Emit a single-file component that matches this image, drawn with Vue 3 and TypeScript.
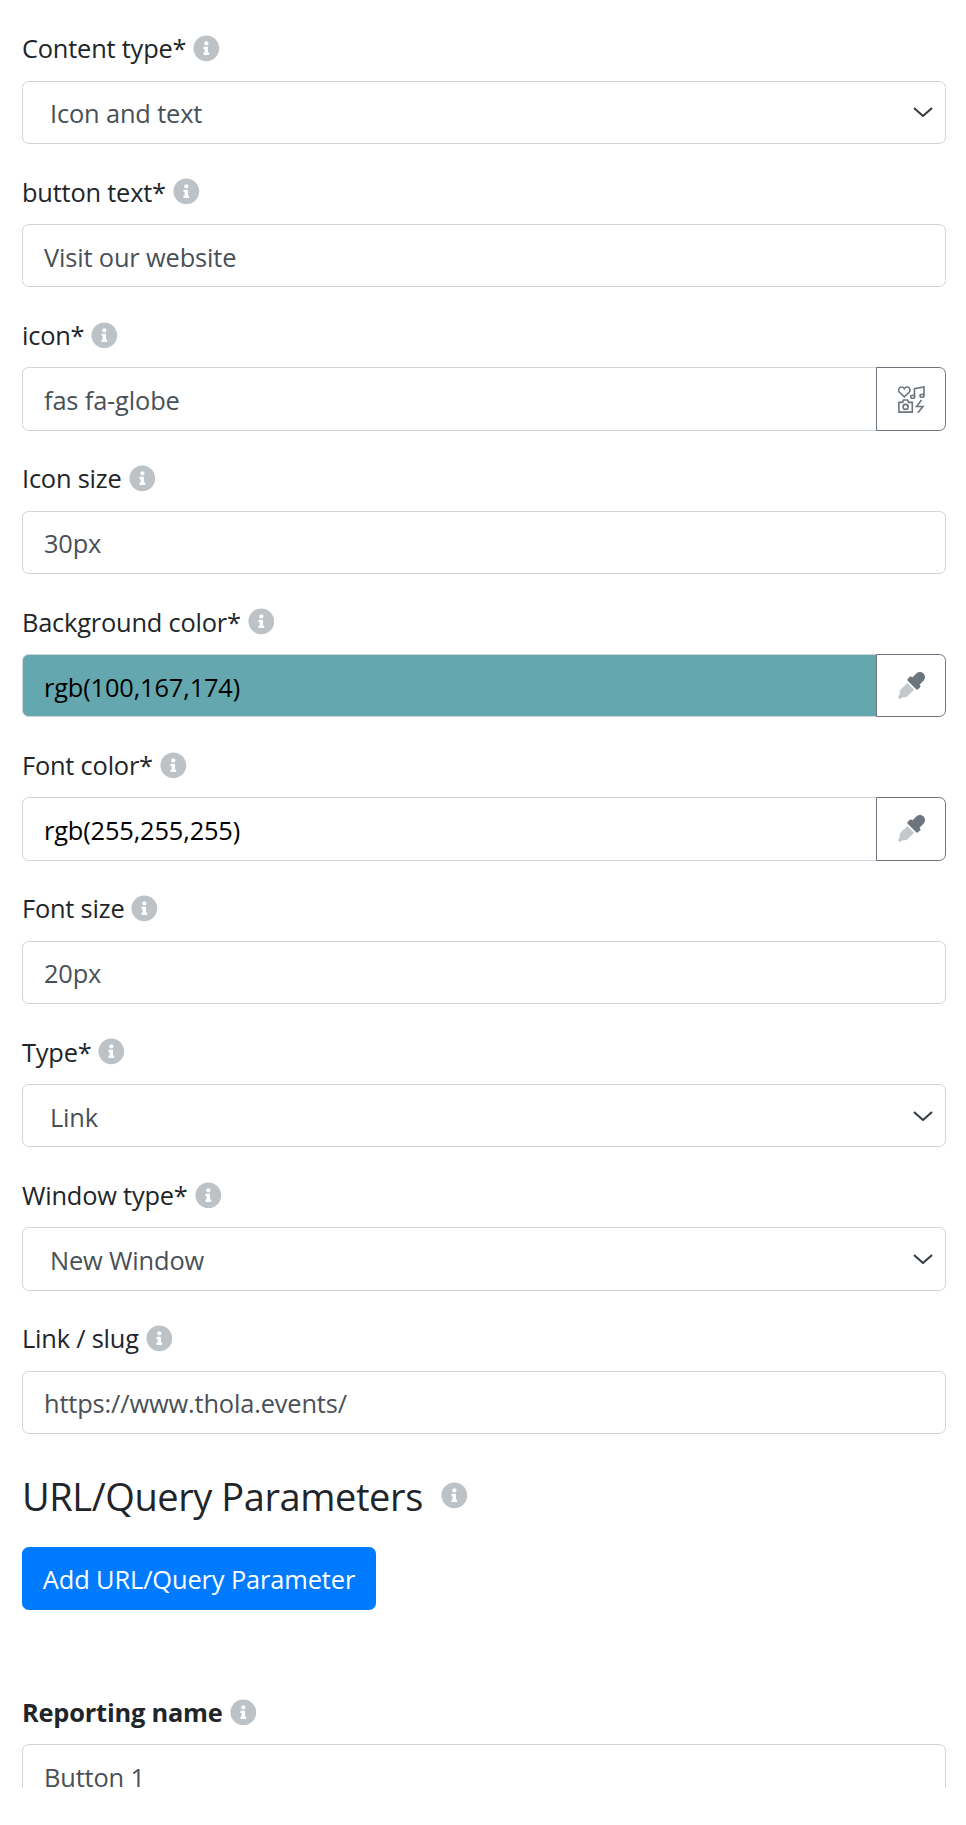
<script setup lang="ts">
type Kind = 'select' | 'input' | 'icon' | 'color'
interface Field {
  label: string
  value: string
  kind: Kind
  fill?: string
}

const fields: Field[] = [
  { label: 'Content type*', value: 'Icon and text', kind: 'select' },
  { label: 'button text*', value: 'Visit our website', kind: 'input' },
  { label: 'icon*', value: 'fas fa-globe', kind: 'icon' },
  { label: 'Icon size', value: '30px', kind: 'input' },
  { label: 'Background color*', value: 'rgb(100,167,174)', kind: 'color', fill: 'rgb(100,167,174)' },
  { label: 'Font color*', value: 'rgb(255,255,255)', kind: 'color', fill: 'rgb(255,255,255)' },
  { label: 'Font size', value: '20px', kind: 'input' },
  { label: 'Type*', value: 'Link', kind: 'select' },
  { label: 'Window type*', value: 'New Window', kind: 'select' },
  { label: 'Link / slug', value: 'https://www.thola.events/', kind: 'input' },
]

const infoPath =
  'M256 8C119.043 8 8 119.083 8 256c0 136.997 111.043 248 248 248s248-111.003 248-248C504 119.083 392.957 8 256 8zm0 110c23.196 0 42 18.804 42 42s-18.804 42-42 42-42-18.804-42-42 18.804-42 42-42zm56 254c0 6.627-5.373 12-12 12h-88c-6.627 0-12-5.373-12-12v-24c0-6.627 5.373-12 12-12h12v-64h-12c-6.627 0-12-5.373-12-12v-24c0-6.627 5.373-12 12-12h64c6.627 0 12 5.373 12 12v100h12c6.627 0 12 5.373 12 12v24z'
</script>

<template>
  <div class="page">
    <div v-for="f in fields" :key="f.label" class="group">
      <div class="label">
        <span>{{ f.label }}</span>
        <svg class="info" viewBox="0 0 512 512"><path :d="infoPath" /></svg>
      </div>
      <div class="control-row">
        <div
          class="control"
          :class="{ 'is-select': f.kind === 'select', 'is-color': f.kind === 'color', joined: f.kind === 'icon' || f.kind === 'color' }"
          :style="f.fill ? { backgroundColor: f.fill } : undefined"
        >
          <span class="value">{{ f.value }}</span>
          <svg v-if="f.kind === 'select'" class="chevron" viewBox="0 0 20 10">
            <path d="M1 1l9 8 9-8" />
          </svg>
        </div>
        <div v-if="f.kind === 'icon'" class="append">
          <svg class="picker" viewBox="0 0 27 27">
            <path d="M6.300 10.800L1.500 6.300C-.3 4.400 .9 1 3.500 1c1.200 0 2.200.6 2.800 1.600C6.900 1.600 7.900 1 9.100 1c2.600 0 3.800 3.400 2 5.300z" />
            <path d="M16.500 10.500V2.600L26 .9v8.600" />
            <ellipse cx="14.700" cy="10.700" rx="2" ry="1.500" />
            <ellipse cx="24" cy="9.700" rx="2" ry="1.500" />
            <path d="M.9 16.400h3.700l1-2.400h4l1 2.400h3.700v9.700H.9z" />
            <circle cx="7.600" cy="20.900" r="2.500" />
            <path d="M23.500 14L18.500 20.500H25L19.800 26.800" />
          </svg>
        </div>
        <div v-if="f.kind === 'color'" class="append">
          <svg class="dropper" viewBox="0 0 512 512">
            <path class="tube" d="M50.75 333.25c-12 12-18.75 28.28-18.75 45.26V424L0 480l32 32 56-32h45.49c16.97 0 33.25-6.74 45.25-18.74l126.64-126.62-128-128L50.75 333.25z" />
            <path class="bulb" d="M483.88 28.12c-37.47-37.5-98.28-37.5-135.75 0l-77.09 77.09-13.1-13.1c-9.44-9.41-24.65-9.3-33.94 0l-40.97 40.97c-9.37 9.37-9.37 24.57 0 33.94l161.94 161.94c9.44 9.44 24.65 9.3 33.94 0L419.88 288c9.37-9.37 9.37-24.57 0-33.94l-13.1-13.1 77.09-77.09c37.5-37.48 37.5-98.26.01-135.75z" />
          </svg>
        </div>
      </div>
    </div>

    <h4 class="heading">
      <span>URL/Query Parameters</span>
      <svg class="info" viewBox="0 0 512 512"><path :d="infoPath" /></svg>
    </h4>
    <button class="add" type="button"><span class="value">Add URL/Query Parameter</span></button>

    <div class="group reporting">
      <div class="label bold">
        <span>Reporting name</span>
        <svg class="info" viewBox="0 0 512 512"><path :d="infoPath" /></svg>
      </div>
      <div class="control"><span class="value">Button 1</span></div>
    </div>
  </div>
</template>

<style>
html,
body {
  margin: 0;
  background: #fff;
}
</style>

<style scoped>
.page {
  box-sizing: border-box;
  width: 966px;
  height: 1788px;
  overflow: hidden;
  padding: 27.4px 20px 0 22px;
  font-family: "Open Sans", "Noto Sans", sans-serif;
  font-size: 25.4px;
  letter-spacing: -0.15px;
  color: #212529;
  background: #fff;
}
.group {
  margin-bottom: 26.67px;
}
.label {
  box-sizing: border-box;
  display: flex;
  align-items: center;
  gap: 7px;
  height: 40px;
  padding-top: 2px;
  margin-bottom: 13.33px;
  letter-spacing: -0.2px;
}
.bold {
  font-weight: 700;
}
.info {
  flex: none;
  width: 26.67px;
  height: 26.67px;
  fill: #bdc2c7;
}
.control-row {
  display: flex;
}
.control {
  box-sizing: border-box;
  flex: 1;
  display: flex;
  align-items: center;
  justify-content: space-between;
  height: 63.33px;
  padding: 0 12px 0 21px;
  border: 1px solid #ced4da;
  border-radius: 6.67px;
  color: #495057;
  background: #fff;
}
.value {
  display: block;
  padding-top: 2px;
}
.is-select {
  padding-left: 27px;
}
.is-color {
  color: #000;
}
.joined {
  border-top-right-radius: 0;
  border-bottom-right-radius: 0;
}
.chevron {
  width: 20px;
  height: 10px;
  fill: none;
  stroke: #343a40;
  stroke-width: 2;
}
.append {
  box-sizing: border-box;
  flex: none;
  display: flex;
  align-items: center;
  justify-content: center;
  width: 70px;
  height: 63.33px;
  margin-left: -1px;
  border: 1px solid #6c757d;
  border-radius: 0 6.67px 6.67px 0;
  background: #fff;
}
.picker {
  width: 27px;
  height: 27px;
  fill: none;
  stroke: #6c757d;
  stroke-width: 1.6;
}
.dropper {
  width: 27px;
  height: 27px;
}
.tube {
  fill: #c4c8cb;
}
.bulb {
  fill: #6c757d;
}
.heading {
  display: flex;
  align-items: center;
  gap: 18px;
  height: 48px;
  margin: 37.67px 0 27.3px;
  font-size: 38px;
  font-weight: 400;
  letter-spacing: -0.42px;
}
.add {
  display: block;
  box-sizing: border-box;
  width: 354px;
  height: 63.33px;
  padding: 0;
  border: 1px solid #007bff;
  border-radius: 6.67px;
  background: #007bff;
  color: #fff;
  font: inherit;
  letter-spacing: -0.12px;
}
.reporting {
  margin-top: 81px;
}
</style>
